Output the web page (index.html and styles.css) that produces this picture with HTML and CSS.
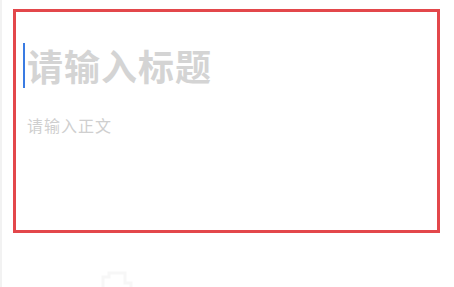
FILE: index.html
```html
<!DOCTYPE html>
<html lang="zh-CN">
<head>
    <meta charset="UTF-8">
    <meta name="viewport" content="width=device-width, initial-scale=1.0">
    <title>编辑</title>
    <link rel="stylesheet" href="styles.css">
</head>
<body>
    <div class="page">
        <!-- Editor -->
        <div class="editor">
            <div class="title-line">
                <span class="caret"></span>
                <span class="title-placeholder">请输入标题</span>
            </div>
            <div class="body-placeholder">请输入正文</div>
        </div>

        <!-- Toolbar (faded) -->
        <div class="toolbar">
            <svg class="tool-icon" width="40" height="28" viewBox="0 0 40 28">
                <path d="M6 28 V18 H12 V14 H28 V24 H34 V28" fill="none" stroke="#f7f7f7" stroke-width="3"/>
            </svg>
        </div>
    </div>
</body>
</html>
```

FILE: styles.css
```css
* { margin: 0; padding: 0; box-sizing: border-box; }
html, body { height: 100%; }
body { font-family: "Noto Sans CJK SC", "Noto Sans", sans-serif; background: #fff; overflow: hidden; }
.page { height: 100%; border-left: 2px solid #f2f2f2; padding: 9px 14px 0 11px; }

/* Editor */
.editor { height: 224px; border: 3px solid #e3474b; padding: 31px 8px 0 7px; }
.title-line { display: flex; align-items: center; height: 45px; }
.caret { width: 2px; height: 45px; background: #3a7be2; margin-right: 2px; }
.title-placeholder { font-size: 36px; font-weight: bold; color: #d4d4d4; line-height: 45px; letter-spacing: 1px; }
.body-placeholder { margin-top: 26px; padding-left: 4px; font-size: 16px; line-height: 22px; color: #cfcfcf; letter-spacing: 1px; }

/* Toolbar */
.toolbar { padding: 26px 0 0 84px; }
.tool-icon { display: block; }
```
